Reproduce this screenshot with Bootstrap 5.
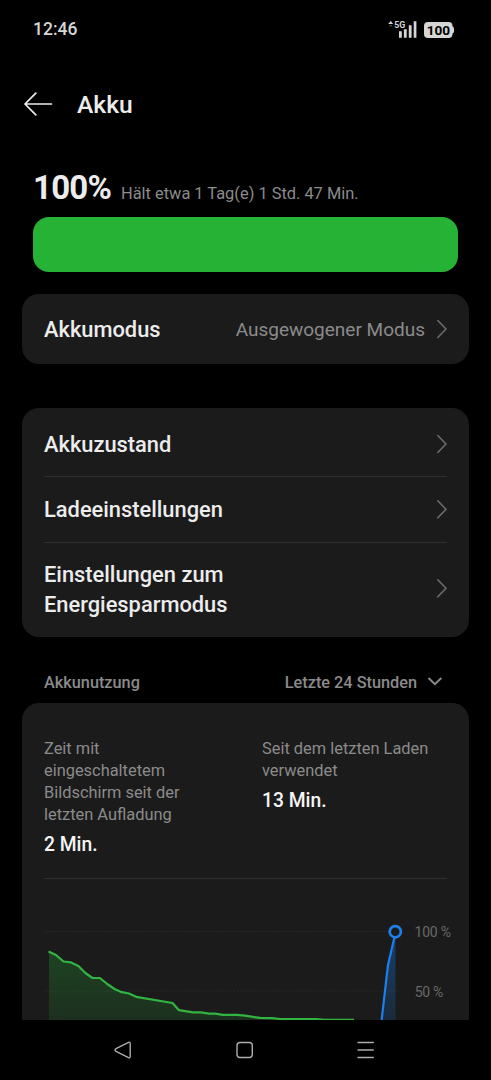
<!DOCTYPE html>
<html lang="de" data-bs-theme="dark">
<head>
<meta charset="utf-8">
<meta name="viewport" content="width=device-width, initial-scale=1">
<title>Akku</title>
<link href="https://cdn.jsdelivr.net/npm/bootstrap@5.3.0/dist/css/bootstrap.min.css" rel="stylesheet">
<style>
  body { background: #000; color: #ececec; font-family: Roboto, "Noto Sans", sans-serif; line-height: 1.2; }
  .screen { height: 1080px; }
  svg { display: block; flex: none; }
  .fw-medium { font-weight: 500; }
  .dim { color: #8b8b8b; }
  .status-bar { height: 59px; padding: 0 37px 0 33px; color: #d6d6d6; }
  .clock { font-size: 17.5px; }
  .title-bar { height: 90px; padding: 0 24px; gap: 24px; }
  .title-bar h1 { font-size: 24.6px; color: #ececec; padding-top: 1px; }
  .charge { height: 68px; padding: 19px 33px 0; gap: 10px; }
  .charge-value { font-size: 33px; line-height: 40px; letter-spacing: -.8px; }
  .charge-note { font-size: 16.4px; }
  .charge-bar { height: 55px; margin: 0 33px 22px; border-radius: 16px; background: #26b335; }
  .panel { margin: 0 22px; padding: 0 22px; border-radius: 17px; background: #1b1b1b; }
  .mode { height: 70px; margin-bottom: 44px; }
  .entry { font-size: 21.85px; line-height: 30.5px; }
  .entry + .entry { border-top: 1px solid #303030; }
  .entry-label, .entry-value { padding-top: 2px; }
  .entry-value { font-size: 19px; }
  .entry-first { height: 68px; padding-top: 4px; }
  .entry-second { height: 66px; }
  .entry-last { height: 95px; padding-bottom: 2px; }
  .usage-head { height: 66px; padding: 25px 48px 0 44px; font-size: 16.3px; }
  .usage { height: 317px; border-radius: 17px 17px 0 0; }
  .stats { height: 176px; padding-top: 35px; border-bottom: 1px solid #303030; }
  .stat-label { font-size: 16.4px; line-height: 22px; }
  .stat-value { font-size: 19.3px; line-height: 24px; margin-top: 6.6px; color: #f4f4f4; }
  .stat-first { width: 218px; padding-right: 70px; }
  .chart { margin-left: -22px; }
  .nav-keys { height: 60px; }
</style>
</head>
<body>
<div class="screen d-flex flex-column overflow-hidden">
  <header class="status-bar d-flex align-items-center justify-content-between flex-shrink-0">
    <span class="clock fw-medium">12:46</span>
    <svg width="67" height="23" viewBox="387 18 67 23" fill="#d6d6d6">
      <path d="M388.200 24l2.500-2.900 2.500 2.900z"/>
      <path d="M389.300 25h2.800v1.400h-2.800z" opacity=".3"/>
      <text x="394.300" y="28" font-size="9.600" font-weight="700" textLength="11" lengthAdjust="spacingAndGlyphs">5G</text>
      <path d="M399 31.300h2.800v6.500H399zM403.900 29.300h2.800v8.500h-2.800zM408.800 25.300h2.800v12.500h-2.800zM413.700 21.300h2.700v16.500h-2.700z"/>
      <rect x="424" y="22" width="28.500" height="16" rx="4"/>
      <path d="M451 26.500h1q2 0 2 2v3q0 2-2 2h-1z"/>
      <text x="438.400" y="35" font-size="13.600" font-weight="700" fill="#000" text-anchor="middle" textLength="23.500">100</text>
    </svg>
  </header>

  <div class="title-bar d-flex align-items-center flex-shrink-0">
    <svg width="29" height="24" viewBox="0 0 29 24" fill="none" stroke="#ececec" stroke-width="1.700" stroke-linecap="round" stroke-linejoin="round"><path d="M27.500 12H1M11.800 1.200L1 12l10.800 10.800"/></svg>
    <h1 class="fw-medium mb-0">Akku</h1>
  </div>

  <div class="charge d-flex align-items-baseline flex-shrink-0">
    <span class="charge-value fw-bold">100%</span>
    <span class="charge-note dim">Hält etwa 1 Tag(e) 1 Std. 47 Min.</span>
  </div>
  <div class="charge-bar flex-shrink-0"></div>

  <section class="panel mode flex-shrink-0">
    <div class="entry d-flex align-items-center h-100">
      <span class="entry-label fw-medium me-auto">Akkumodus</span>
      <span class="entry-value dim me-2 pe-1">Ausgewogener Modus</span>
      <svg width="10" height="20" viewBox="0 0 10 20" fill="none" stroke="#6c6c6c" stroke-width="1.600" stroke-linecap="round"><path d="M.8 1.500L9 10 .8 18.500"/></svg>
    </div>
  </section>

  <section class="panel flex-shrink-0">
    <div class="entry entry-first d-flex align-items-center">
      <span class="entry-label fw-medium me-auto">Akkuzustand</span>
      <svg width="10" height="20" viewBox="0 0 10 20" fill="none" stroke="#6c6c6c" stroke-width="1.600" stroke-linecap="round"><path d="M.8 1.500L9 10 .8 18.500"/></svg>
    </div>
    <div class="entry entry-second d-flex align-items-center">
      <span class="entry-label fw-medium me-auto">Ladeeinstellungen</span>
      <svg width="10" height="20" viewBox="0 0 10 20" fill="none" stroke="#6c6c6c" stroke-width="1.600" stroke-linecap="round"><path d="M.8 .8L9 9.300 .8 17.800"/></svg>
    </div>
    <div class="entry entry-last d-flex align-items-center">
      <span class="entry-label fw-medium me-auto">Einstellungen zum<br>Energiesparmodus</span>
      <svg width="10" height="20" viewBox="0 0 10 20" fill="none" stroke="#6c6c6c" stroke-width="1.600" stroke-linecap="round"><path d="M.8 .8L9 9.300 .8 17.800"/></svg>
    </div>
  </section>

  <div class="usage-head dim fw-medium d-flex align-items-center flex-shrink-0">
    <span class="me-auto">Akkunutzung</span>
    <span>Letzte 24 Stunden</span>
    <svg class="ms-2" width="18" height="12" viewBox="-3 1 18 12" fill="none" stroke="#8b8b8b" stroke-width="2"><path d="M.5 2l6.400 6.200L13.300 2"/></svg>
  </div>

  <section class="panel usage overflow-hidden flex-shrink-0">
    <div class="stats d-flex">
      <div class="stat-first">
        <div class="stat-label dim">Zeit mit eingeschaltetem Bildschirm seit der letzten Aufladung</div>
        <div class="stat-value fw-medium">2 Min.</div>
      </div>
      <div>
        <div class="stat-label dim">Seit dem letzten Laden<br>verwendet</div>
        <div class="stat-value fw-medium">13 Min.</div>
      </div>
    </div>
    <svg class="chart" width="447" height="141" viewBox="22 879 447 141">
      <defs>
        <linearGradient id="g" gradientUnits="userSpaceOnUse" x1="0" y1="932" x2="0" y2="1050"><stop offset="0" stop-color="#26b335" stop-opacity=".3"/><stop offset="1" stop-color="#26b335" stop-opacity=".08"/></linearGradient>
        <linearGradient id="b" gradientUnits="userSpaceOnUse" x1="0" y1="932" x2="0" y2="1050"><stop offset="0" stop-color="#1680f0" stop-opacity=".36"/><stop offset="1" stop-color="#1680f0" stop-opacity=".08"/></linearGradient>
      </defs>
      <path d="M44 931.500H402M44 991H402" stroke="#292929" stroke-dasharray="2 1.500"/>
      <path fill="url(#g)" d="M49 951.500l7.300 3.500 7 6.500 7.300.9 7.400 3.600 7.200 7 7.300 5h7.300l7.200 6 7.300 5 7.200 3.200 7.300 1.300 7.200 3.300L172 1003l7.300 7.200 14.200 2.100 36 2.600h8l22 3.300 52 1.500 43 .8v1H49z"/>
      <path fill="none" stroke="#32b440" stroke-width="2.200" stroke-linejoin="round" d="M48.500 951.500L56 955l7.500 6.500 7.500.9 7.400 3.600 7 7 7.100 5h7.500l7.200 6 7.300 5 7.200 3.200 7.300 1.300 7.200 3.300L172.500 1003l6.500 7.200 14 2.200h8l8 1.200h6l8 1.200h14l8 .9 15 2.200 12 .2 8 .9h36l8 .8h30"/>
      <path fill="url(#b)" d="M395.500 936L388 965l-6.500 55h14z"/>
      <path fill="none" stroke="#1b80ec" stroke-width="2.200" stroke-linejoin="round" d="M394.500 937L388 965l-6.500 56"/>
      <circle cx="395.300" cy="931.700" r="5.600" fill="#1b1b1b" stroke="#1b80ec" stroke-width="2.700"/>
      <g fill="#696969" font-size="14"><text x="414.500" y="937.300" textLength="36.500">100 %</text><text x="414.700" y="996.500" textLength="28.500">50 %</text></g>
    </svg>
  </section>

  <nav class="nav-keys flex-shrink-0" aria-label="Navigation">
    <svg width="491" height="60" viewBox="0 1020 491 60" fill="none" stroke="#adadad" stroke-width="1.400" stroke-linecap="round" stroke-linejoin="round">
      <path d="M116 1048.600L128 1042.600q2.200-1 2.200 1.200v12.400q0 2.200-2.200 1.200L116 1051.400q-2-1.400 0-2.800z"/>
      <rect x="237" y="1042.500" width="15.300" height="15" rx="3"/>
      <path d="M358 1042.500h15.300M358 1050h15.300M358 1057.500h15.300"/>
    </svg>
  </nav>
</div>
<script src="https://cdn.jsdelivr.net/npm/bootstrap@5.3.0/dist/js/bootstrap.bundle.min.js"></script>
</body>
</html>
